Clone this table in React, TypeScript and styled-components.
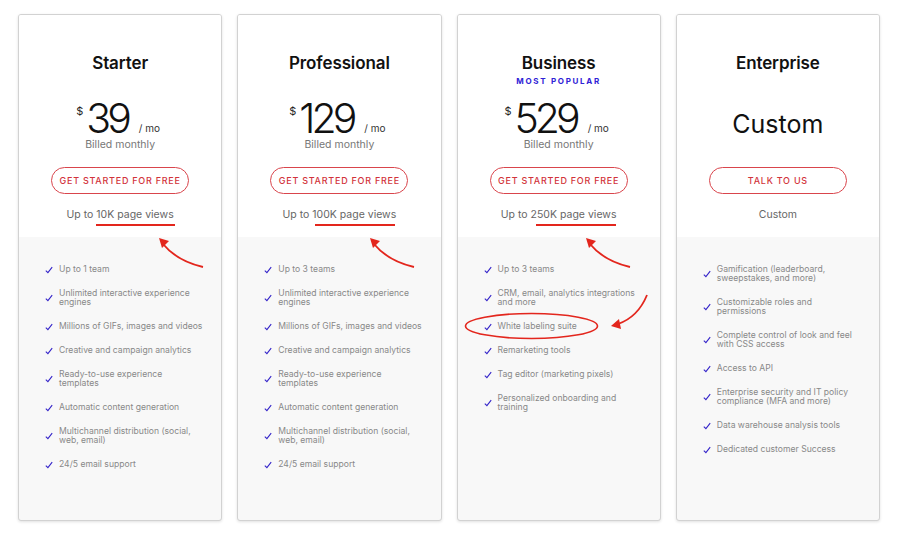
import styled, { createGlobalStyle } from 'styled-components';

const GlobalStyle = createGlobalStyle`
  html, body {
    margin: 0;
    padding: 0;
    background: #ffffff;
  }
  body {
    font-family: 'Inter', 'Lato', sans-serif;
    -webkit-font-smoothing: antialiased;
  }
`;

const Page = styled.div`
  width: 900px;
  height: 535px;
  box-sizing: border-box;
  padding: 14px 20px 14px 18px;
  display: grid;
  grid-template-columns: repeat(4, 1fr);
  gap: 15px;
`;

const Card = styled.div`
  position: relative;
  display: flex;
  flex-direction: column;
  border: 1px solid #d2d2d2;
  border-radius: 3px;
  box-shadow: 0 1px 3px rgba(0, 0, 0, 0.12);
  background: #f8f8f8;
  overflow: hidden;
`;

const Top = styled.div`
  background: #ffffff;
  display: flex;
  flex-direction: column;
  align-items: center;
  padding: 38px 0 15px;
`;

const Header = styled.div`
  height: 44px;
  display: flex;
  flex-direction: column;
  align-items: center;
`;

const Title = styled.h2`
  margin: 0;
  font-size: 17px;
  line-height: 20px;
  font-weight: 600;
  color: #111;
  letter-spacing: -0.1px;
`;

const Badge = styled.div`
  margin-top: 3px;
  font-size: 8px;
  line-height: 10px;
  font-weight: 700;
  letter-spacing: 1.7px;
  color: #2f22d6;
`;

const PriceBlock = styled.div`
  height: 54px;
  display: flex;
  flex-direction: column;
  align-items: center;
  justify-content: center;
`;

const PriceRow = styled.div`
  display: flex;
  align-items: flex-start;
  height: 36px;
  margin: 2px 4px 0 0;
`;

const Currency = styled.span`
  font-size: 11px;
  line-height: 11px;
  margin-top: 6px;
  margin-right: 3px;
  color: #222;
`;

const Amount = styled.span`
  font-size: 41px;
  line-height: 36px;
  font-weight: 300;
  letter-spacing: -4px;
  color: #111;
`;

const Per = styled.span`
  align-self: flex-end;
  font-size: 10px;
  line-height: 10px;
  margin: 0 0 3px 11px;
  color: #333;
`;

const Billed = styled.div`
  margin-top: 3px;
  font-size: 10.5px;
  line-height: 12px;
  color: #777;
`;

const CustomPrice = styled.div`
  font-size: 25px;
  line-height: 32px;
  font-weight: 400;
  color: #111;
`;

const Button = styled.button`
  margin-top: 16px;
  width: 138px;
  height: 27px;
  border: 1px solid #d9454c;
  border-radius: 14px;
  background: #fff;
  color: #d2333b;
  font-family: 'Inter', 'Lato', sans-serif;
  font-size: 9px;
  font-weight: 500;
  letter-spacing: 0.75px;
  padding: 0;
`;

const Views = styled.div`
  margin-top: 14px;
  font-size: 10.5px;
  line-height: 14px;
  color: #666;
`;

const Features = styled.ul`
  list-style: none;
  margin: 0;
  padding: 28px 18px 0 26px;
  display: flex;
  flex-direction: column;
  gap: 15px;
`;

const Feature = styled.li`
  display: flex;
  align-items: center;
  gap: 6px;
  font-size: 8.6px;
  line-height: 9px;
  color: #888;
`;

const Check = styled.svg`
  flex: none;
  width: 8px;
  height: 8px;
`;

const Notes = styled.svg`
  position: absolute;
  inset: 0;
  width: 100%;
  height: 100%;
  pointer-events: none;
`;

type Note =
  | { kind: 'line'; x1: number; x2: number; y: number }
  | { kind: 'arrow'; d: string; head: string }
  | { kind: 'ring'; cx: number; cy: number; rx: number; ry: number };

type Plan = {
  name: string;
  badge?: string;
  price?: string;
  button: string;
  views: string;
  features: string[];
  notes: Note[];
};

const RED = '#e3261d';

const arrowUp = (x: number): Note => ({
  kind: 'arrow',
  d: `M${x + 44} 252 Q${x + 18} 246 ${x + 4} 229`,
  head: `M${x} 223 L${x + 10} 226 L${x + 3} 233 Z`,
});

const plans: Plan[] = [
  {
    name: 'Starter',
    price: '39',
    button: 'GET STARTED FOR FREE',
    views: 'Up to 10K page views',
    features: [
      'Up to 1 team',
      'Unlimited interactive experience engines',
      'Millions of GIFs, images and videos',
      'Creative and campaign analytics',
      'Ready-to-use experience templates',
      'Automatic content generation',
      'Multichannel distribution (social, web, email)',
      '24/5 email support',
    ],
    notes: [{ kind: 'line', x1: 77, x2: 156, y: 210 }, arrowUp(140)],
  },
  {
    name: 'Professional',
    price: '129',
    button: 'GET STARTED FOR FREE',
    views: 'Up to 100K page views',
    features: [
      'Up to 3 teams',
      'Unlimited interactive experience engines',
      'Millions of GIFs, images and videos',
      'Creative and campaign analytics',
      'Ready-to-use experience templates',
      'Automatic content generation',
      'Multichannel distribution (social, web, email)',
      '24/5 email support',
    ],
    notes: [{ kind: 'line', x1: 77, x2: 157, y: 210 }, arrowUp(132)],
  },
  {
    name: 'Business',
    badge: 'MOST POPULAR',
    price: '529',
    button: 'GET STARTED FOR FREE',
    views: 'Up to 250K page views',
    features: [
      'Up to 3 teams',
      'CRM, email, analytics integrations and more',
      'White labeling suite',
      'Remarketing tools',
      'Tag editor (marketing pixels)',
      'Personalized onboarding and training',
    ],
    notes: [
      { kind: 'line', x1: 78, x2: 158, y: 210 },
      arrowUp(128),
      {
        kind: 'arrow',
        d: 'M189 280 Q180 302 160 309',
        head: 'M153 311 L161 304 L163 314 Z',
      },
      { kind: 'ring', cx: 73.5, cy: 311, rx: 66, ry: 12.5 },
    ],
  },
  {
    name: 'Enterprise',
    button: 'TALK TO US',
    views: 'Custom',
    features: [
      'Gamification (leaderboard, sweepstakes, and more)',
      'Customizable roles and permissions',
      'Complete control of look and feel with CSS access',
      'Access to API',
      'Enterprise security and IT policy compliance (MFA and more)',
      'Data warehouse analysis tools',
      'Dedicated customer Success',
    ],
    notes: [],
  },
];

function CheckMark() {
  return (
    <Check viewBox="0 0 8 8">
      <path d="M0.8 4.6 L2.9 6.6 L7.2 1.2" fill="none" stroke="#3424c9" strokeWidth="1.1" />
    </Check>
  );
}

function Annotations({ notes }: { notes: Note[] }) {
  if (!notes.length) return null;
  return (
    <Notes>
      {notes.map((n, i) => {
        if (n.kind === 'line')
          return <line key={i} x1={n.x1} x2={n.x2} y1={n.y} y2={n.y} stroke={RED} strokeWidth="2" />;
        if (n.kind === 'ring')
          return (
            <ellipse key={i} cx={n.cx} cy={n.cy} rx={n.rx} ry={n.ry} fill="none" stroke={RED} strokeWidth="1.6" />
          );
        return (
          <g key={i}>
            <path d={n.d} fill="none" stroke={RED} strokeWidth="1.8" />
            <path d={n.head} fill={RED} />
          </g>
        );
      })}
    </Notes>
  );
}

export default function App() {
  return (
    <>
      <GlobalStyle />
      <Page>
        {plans.map((plan) => (
          <Card key={plan.name}>
            <Top>
              <Header>
                <Title>{plan.name}</Title>
                {plan.badge && <Badge>{plan.badge}</Badge>}
              </Header>
              <PriceBlock>
                {plan.price ? (
                  <>
                    <PriceRow>
                      <Currency>$</Currency>
                      <Amount>{plan.price}</Amount>
                      <Per>/ mo</Per>
                    </PriceRow>
                    <Billed>Billed monthly</Billed>
                  </>
                ) : (
                  <CustomPrice>Custom</CustomPrice>
                )}
              </PriceBlock>
              <Button>{plan.button}</Button>
              <Views>{plan.views}</Views>
            </Top>
            <Features>
              {plan.features.map((f) => (
                <Feature key={f}>
                  <CheckMark />
                  <span>{f}</span>
                </Feature>
              ))}
            </Features>
            <Annotations notes={plan.notes} />
          </Card>
        ))}
      </Page>
    </>
  );
}
